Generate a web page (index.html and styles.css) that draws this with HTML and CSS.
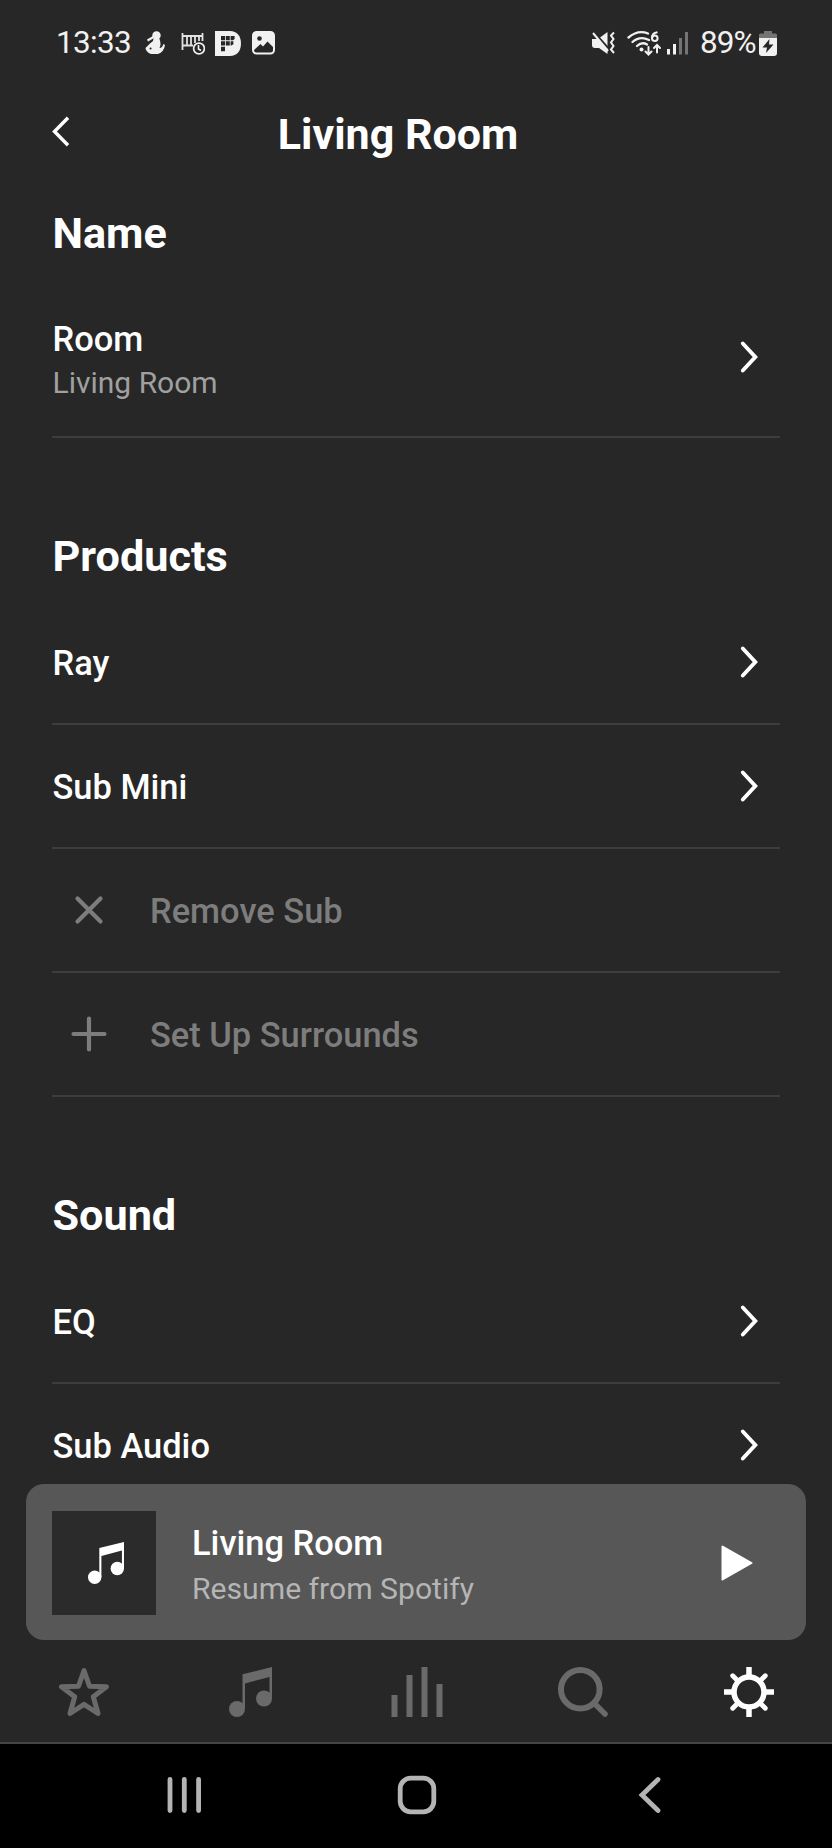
FILE: index.html
```html
<!DOCTYPE html>
<html lang="en">
<head>
<meta charset="utf-8">
<title>Living Room</title>
<link rel="stylesheet" href="styles.css">
</head>
<body>
<svg class="defs" width="0" height="0">
  <symbol id="chevron" viewBox="0 0 20 34"><path d="M2.800 3.500L15.300 17L2.800 30.500" fill="none" stroke="currentColor" stroke-width="3.900" stroke-linecap="round"/></symbol>
  <symbol id="note" viewBox="0 0 43 50"><path d="M13.500 7.200L43 0V32H40.500V10L16 16.500V42H13.500Z"/><circle cx="8" cy="42" r="8"/><circle cx="35" cy="31.500" r="8"/></symbol>
</svg>
<div class="screen">
  <header class="status">
    <span class="clock">13:33</span>
    <svg class="st-person" viewBox="0 0 20 24" width="20" height="24"><circle cx="11.500" cy="4.500" r="4.200"/><path d="M8.500 7.500L14.500 8Q16.500 13 14.500 17Q17.500 17 18.300 13L20 14Q19 21 13 23H6Q1 21 .5 17L5 12.500L8 10Z"/><path d="M2.500 9.500L8.500 6" stroke="#f1f1f1" stroke-width="2.200"/><path d="M5.500 17.500h.1" stroke="#272727" stroke-width="2" stroke-linecap="round"/></svg>
    <svg class="st-crib" viewBox="0 0 24 24" width="24" height="24"><path d="M1.500 2V19M21.500 2V10M1 5H22M1 14.500H12M6 5V14M10 5V14M14 5V12M18 5V10" fill="none" stroke="#e2e2e2" stroke-width="1.800"/><circle cx="18" cy="17.500" r="5.400" fill="#272727" stroke="#f1f1f1" stroke-width="1.700"/><path d="M17.500 14V18L20 19.500" fill="none" stroke="#f1f1f1" stroke-width="1.600"/></svg>
    <svg class="st-p" viewBox="0 0 26 25" width="26" height="25"><path d="M0 0H15C22 0 26 5 26 12.500S22 25 15 25H0Z"/><path fill="#272727" d="M6 5h4v4.300H6zM10.800 5h4v4.300h-4zM15.600 5h4v3L18 9.300h-2.400zM6 10.200h4v4.300H6zM10.800 10.200h4v4.300h-4zM15.600 10.200h2.800v3l-2 1.300h-.8zM6 15.800h4v4.500H6z"/></svg>
    <svg class="st-pic" viewBox="0 0 23 24" width="23" height="24"><rect x="1" y="1" width="21" height="21.500" rx="3.500" fill="#272727" stroke="#f1f1f1" stroke-width="2"/><path d="M2 2H21V16L15.500 10.500L11 15.500L8.500 13L2 19Z"/><circle cx="7.500" cy="7.500" r="2.300" fill="#272727"/></svg>
    <div class="status-right">
      <svg class="st-mute" viewBox="0 0 24 24" width="24" height="24"><path d="M0 8H6L15.500 1V23L7 17H3Q0 17 0 14Z"/><path d="M0 -1L16 17" stroke="#272727" stroke-width="2.200"/><path d="M1 2L16 20" stroke="#f1f1f1" stroke-width="2"/><path d="M22 1.500L19 4.500L21.500 8L19 11.500L21.500 15L19 18.500L22 22" fill="none" stroke="#f1f1f1" stroke-width="2"/></svg>
      <svg class="st-wifi" viewBox="0 0 34 25" width="34" height="25"><g fill="none" stroke="#f1f1f1" stroke-width="2.300" stroke-linecap="round"><path d="M1.500 6.500Q11 -1.500 21 2.500M5.500 11Q13 4.500 22 9M10 15Q15 10.500 20 13.500"/><path d="M29.500 1.500Q25 2.500 25 7"/><circle cx="27.800" cy="7.300" r="2.800" stroke-width="2"/><path d="M21.500 16V23M18.500 20.500L21.500 23.500L24.500 20.500M30 21.500V14M27 17L30 14L33 17" stroke-width="2"/></g><circle cx="14.500" cy="18.500" r="2"/></svg>
      <svg class="st-signal" viewBox="0 0 22 23" width="22" height="23"><path d="M0 17h3v5.500H0zM6 12h3v10.500H6z"/><path fill="#747474" d="M12 6h3v16.500h-3zM18 0h3v22.500h-3z"/></svg>
      <span class="battery-text">89%</span>
      <svg class="st-bat" viewBox="0 0 18 25" width="18" height="25"><path fill="#747474" d="M5 0h8v2.500h3.500Q18 2.500 18 4v4H0V4Q0 2.500 1.500 2.500H5z"/><path d="M0 7H18V22Q18 25 15 25H3Q0 25 0 22Z"/><path fill="#272727" d="M10.500 8L3.500 16.500H8L7 22L14.500 13.500H10Z"/></svg>
    </div>
  </header>
  <div class="titlebar">
    <svg class="back" viewBox="0 0 20 34" width="20" height="34"><path d="M17 2.800L3.500 16.500L17 30.200" fill="none" stroke="#fff" stroke-width="3.400"/></svg>
    <h1>Living Room</h1>
  </div>
  <main>
    <section>
      <h2>Name</h2>
      <div class="row tall"><div><p class="label">Room</p><p class="sub">Living Room</p></div><svg class="chev"><use href="#chevron"/></svg></div>
    </section>
    <section class="products">
      <h2>Products</h2>
      <div class="row"><p class="label">Ray</p><svg class="chev"><use href="#chevron"/></svg></div>
      <div class="row"><p class="label">Sub Mini</p><svg class="chev"><use href="#chevron"/></svg></div>
      <div class="row action"><svg class="act" viewBox="0 0 36 36"><path d="M6.500 6.500L29.500 29.500M29.500 6.500L6.500 29.500"/></svg><p class="label">Remove Sub</p></div>
      <div class="row action"><svg class="act" viewBox="0 0 36 36"><path d="M2.500 18H33.500M18 2.500V33.500"/></svg><p class="label">Set Up Surrounds</p></div>
    </section>
    <section class="sound">
      <h2>Sound</h2>
      <div class="row"><p class="label">EQ</p><svg class="chev"><use href="#chevron"/></svg></div>
      <div class="row"><p class="label">Sub Audio</p><svg class="chev"><use href="#chevron"/></svg></div>
    </section>
  </main>
  <div class="bottom">
    <div class="player">
      <div class="art"><svg viewBox="0 0 43 50" width="36" height="42"><use href="#note"/></svg></div>
      <div class="track"><p class="label">Living Room</p><p class="sub">Resume from Spotify</p></div>
      <svg class="play" viewBox="0 0 32 36" width="32" height="36"><path d="M1.500 1.500L30.500 18L1.500 34.500Z" stroke="#fff" stroke-width="2" stroke-linejoin="round"/></svg>
    </div>
    <nav class="tabs">
      <div><svg viewBox="0 0 52 52" width="52" height="52"><path d="M26 4.500L31.500 20.300L48.500 20.800L35.300 30.800L40 47.500L26 38.300L12 47.500L16.700 30.800L3.500 20.800L20.500 20.300Z" fill="none" stroke="currentColor" stroke-width="5" stroke-linejoin="round"/></svg></div>
      <div><svg viewBox="0 0 43 50" width="43" height="50"><use href="#note"/></svg></div>
      <div><svg viewBox="0 0 52 50" width="52" height="50"><path d="M.5 28h6v22h-6zM15.500 8h6v42h-6zM30.500 0h6v50h-6zM45.500 17h6v33h-6z"/></svg></div>
      <div><svg viewBox="0 0 50 50" width="50" height="50"><g fill="none" stroke="currentColor" stroke-width="6"><circle cx="22.300" cy="22.300" r="19.300"/><path d="M36 36L47 47" stroke-linecap="round" stroke-width="5.500"/></g></svg></div>
      <div class="active"><svg viewBox="-26 -26 52 52" width="52" height="52"><g fill="none" stroke="currentColor" stroke-width="5.500"><circle r="15"/><path d="M0 -25V-16M0 25V16M-25 0H-16M25 0H16" /><path stroke-width="4.800" stroke-linecap="round" d="M-16.300 -16.300L-12 -12M16.300 -16.300L12 -12M-16.300 16.300L-12 12M16.300 16.300L12 12"/></g></svg></div>
    </nav>
  </div>
  <footer class="system">
    <div><svg viewBox="0 0 36 36" width="36" height="36"><path d="M4 2.500V33.500M18.300 2.500V33.500M32.600 2.500V33.500"/></svg></div>
    <div><svg viewBox="0 0 40 40" width="40" height="40"><rect x="3.200" y="3.200" width="33.600" height="33.600" rx="10.500"/></svg></div>
    <div><svg viewBox="0 0 24 38" width="24" height="38"><path d="M20 3.500L4 19L20 34.500"/></svg></div>
  </footer>
</div>
</body>
</html>
```
FILE: styles.css
```css
* { box-sizing: border-box; margin: 0; padding: 0; }
body { background: #272727; color: #fff; font-family: Roboto, "Liberation Sans", sans-serif; }
svg { display: block; flex: none; fill: currentColor; }
.defs { position: absolute; }
.screen { width: 832px; height: 1848px; display: flex; flex-direction: column; overflow: hidden; }
.status { height: 86px; flex: none; display: flex; align-items: center; padding: 0 55px 0 56px; color: #f1f1f1; font-size: 31.500px; }
.clock { width: 89px; letter-spacing: -0.7px; padding-bottom: 2px; }
.st-crib { margin-left: 16px; }
.st-p { margin-left: 10px; }
.st-pic { margin-left: 11px; }
.status-right { margin-left: auto; display: flex; align-items: center; }
.st-wifi { margin-left: 11px; }
.st-signal { margin-left: 6px; }
.battery-text { margin-left: 11px; width: 56px; letter-spacing: -1px; padding-bottom: 2px; }
.st-bat { margin-left: 3px; }
.titlebar { height: 92px; flex: none; display: flex; align-items: center; padding: 0 51px; }
h1 { width: 654px; text-align: center; font-size: 43px; line-height: 50px; font-weight: 700; padding-top: 3px; }
main { flex: 1; min-height: 0; overflow: hidden; padding: 0 52px; }
h2 { font-size: 43.200px; line-height: 50px; font-weight: 700; padding-top: 31px; padding-bottom: 0; padding-left: 0.5px; }
.row { height: 123.850px; display: flex; align-items: center; justify-content: space-between; border-bottom: 2px solid #3d3d3d; padding-right: 20px; }
.row.tall { height: 179px; padding-top: 19px; }
.row.tall > div { padding-top: 7px; }
.label { font-size: 34.450px; line-height: 44px; font-weight: 500; padding-left: 0.5px; }
.row > .label { padding-top: 2px; }
.sub { font-size: 30px; line-height: 44px; color: #a0a0a0; padding-left: 0.5px; }
.chev { width: 20px; height: 34px; }
.products h2, .sound h2 { padding-top: 94px; padding-bottom: 19.500px; }
.row.action { justify-content: flex-start; color: #7d7d7d; gap: 42.500px; padding-left: 19px; }
.act { width: 36px; height: 36px; fill: none; stroke: currentColor; stroke-width: 4.200; stroke-linecap: round; }
.bottom { height: 260px; flex: none; padding: 0 26px; border-bottom: 2px solid #454545; }
.player { height: 156px; border-radius: 18px; background: #575757; display: flex; align-items: center; padding: 1px 53px 0 26px; }
.art { width: 104px; height: 104px; background: #2b2b2b; display: flex; align-items: center; justify-content: center; padding-left: 3px; }
.track { flex: 1; margin-left: 35.500px; padding-top: 7px; }
.track .label { line-height: 45px; }
.track .sub { color: #b5b5b5; font-size: 30.150px; line-height: 46px; }
.tabs { display: flex; margin: 0 -26px; padding: 2px 0 0 1px; height: 102px; color: #6a6a6a; }
.tabs div { flex: 1; display: flex; align-items: center; justify-content: center; }
.tabs .active { color: #fff; }
.system { height: 104px; flex: none; background: #000; display: flex; align-items: center; padding: 0 66px 2px 68px; }
.system div { flex: 1; display: flex; justify-content: center; }
.system svg { fill: none; stroke: #b4b4b4; stroke-width: 4.800; stroke-linecap: round; }
```
